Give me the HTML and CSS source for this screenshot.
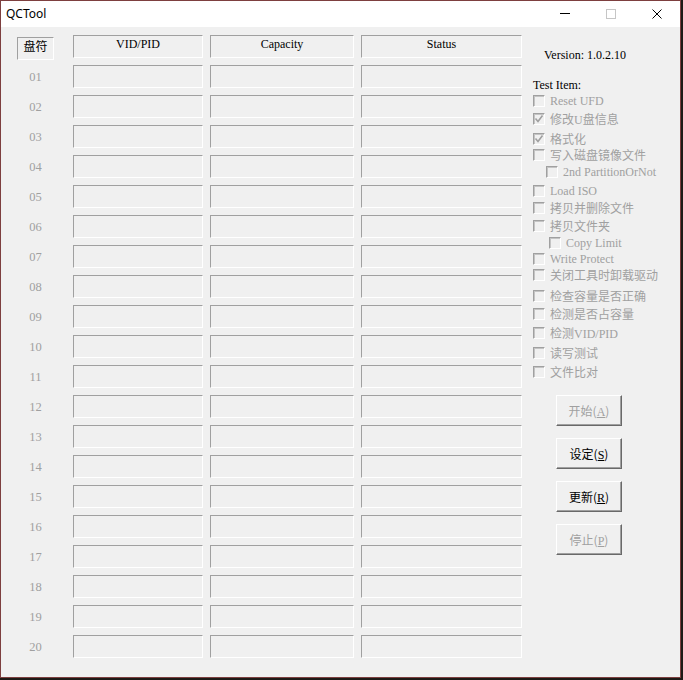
FILE: index.html
```html
<!DOCTYPE html>
<html lang="zh-cn">
<head>
    <meta charset="UTF-8">
    <title>QCTool</title>
    <link rel="stylesheet" href="styles.css">
</head>
<body>

<div class="window">
    <div class="titlebar">
        <span class="title">QCTool</span>
        <div class="controls">
            <span class="ctl"><i class="min"></i></span>
            <span class="ctl"><i class="max"></i></span>
            <span class="ctl">
                <svg width="10" height="10" viewBox="0 0 10 10"><path d="M0.5 0.5 L9.5 9.5 M9.5 0.5 L0.5 9.5" stroke="#000" stroke-width="1" fill="none"/></svg>
            </span>
        </div>
    </div>

    <div class="client">
        <div class="table">
            <div class="row head">
                <div class="num"><span class="drive">盘符</span></div>
                <div class="cell c1">VID/PID</div>
                <div class="cell c2">Capacity</div>
                <div class="cell c3">Status</div>
            </div>
            <div class="row"><div class="num">01</div><div class="cell c1"></div><div class="cell c2"></div><div class="cell c3"></div></div>
            <div class="row"><div class="num">02</div><div class="cell c1"></div><div class="cell c2"></div><div class="cell c3"></div></div>
            <div class="row"><div class="num">03</div><div class="cell c1"></div><div class="cell c2"></div><div class="cell c3"></div></div>
            <div class="row"><div class="num">04</div><div class="cell c1"></div><div class="cell c2"></div><div class="cell c3"></div></div>
            <div class="row"><div class="num">05</div><div class="cell c1"></div><div class="cell c2"></div><div class="cell c3"></div></div>
            <div class="row"><div class="num">06</div><div class="cell c1"></div><div class="cell c2"></div><div class="cell c3"></div></div>
            <div class="row"><div class="num">07</div><div class="cell c1"></div><div class="cell c2"></div><div class="cell c3"></div></div>
            <div class="row"><div class="num">08</div><div class="cell c1"></div><div class="cell c2"></div><div class="cell c3"></div></div>
            <div class="row"><div class="num">09</div><div class="cell c1"></div><div class="cell c2"></div><div class="cell c3"></div></div>
            <div class="row"><div class="num">10</div><div class="cell c1"></div><div class="cell c2"></div><div class="cell c3"></div></div>
            <div class="row"><div class="num">11</div><div class="cell c1"></div><div class="cell c2"></div><div class="cell c3"></div></div>
            <div class="row"><div class="num">12</div><div class="cell c1"></div><div class="cell c2"></div><div class="cell c3"></div></div>
            <div class="row"><div class="num">13</div><div class="cell c1"></div><div class="cell c2"></div><div class="cell c3"></div></div>
            <div class="row"><div class="num">14</div><div class="cell c1"></div><div class="cell c2"></div><div class="cell c3"></div></div>
            <div class="row"><div class="num">15</div><div class="cell c1"></div><div class="cell c2"></div><div class="cell c3"></div></div>
            <div class="row"><div class="num">16</div><div class="cell c1"></div><div class="cell c2"></div><div class="cell c3"></div></div>
            <div class="row"><div class="num">17</div><div class="cell c1"></div><div class="cell c2"></div><div class="cell c3"></div></div>
            <div class="row"><div class="num">18</div><div class="cell c1"></div><div class="cell c2"></div><div class="cell c3"></div></div>
            <div class="row"><div class="num">19</div><div class="cell c1"></div><div class="cell c2"></div><div class="cell c3"></div></div>
            <div class="row"><div class="num">20</div><div class="cell c1"></div><div class="cell c2"></div><div class="cell c3"></div></div>
        </div>

        <div class="panel">
            <div class="version">Version: 1.0.2.10</div>
            <div class="group-title">Test Item:</div>
            <div class="items">
                <label class="item"><span class="box"></span>Reset UFD</label>
                <label class="item"><span class="box checked"><svg width="10" height="10" viewBox="0 0 10 10"><path d="M1.5 4.5 L4 7.5 L8.5 1.5" stroke="#a0a0a0" stroke-width="1.6" fill="none"/></svg></span>修改U盘信息</label>
                <label class="item"><span class="box checked"><svg width="10" height="10" viewBox="0 0 10 10"><path d="M1.5 4.5 L4 7.5 L8.5 1.5" stroke="#a0a0a0" stroke-width="1.6" fill="none"/></svg></span>格式化</label>
                <label class="item"><span class="box"></span>写入磁盘镜像文件</label>
                <label class="item sub"><span class="box"></span>2nd PartitionOrNot</label>
                <label class="item"><span class="box"></span>Load ISO</label>
                <label class="item"><span class="box"></span>拷贝并删除文件</label>
                <label class="item"><span class="box"></span>拷贝文件夹</label>
                <label class="item sub2"><span class="box"></span>Copy Limit</label>
                <label class="item"><span class="box"></span>Write Protect</label>
                <label class="item"><span class="box"></span>关闭工具时卸载驱动</label>
                <label class="item"><span class="box"></span>检查容量是否正确</label>
                <label class="item"><span class="box"></span>检测是否占容量</label>
                <label class="item"><span class="box"></span>检测VID/PID</label>
                <label class="item"><span class="box"></span>读写测试</label>
                <label class="item"><span class="box"></span>文件比对</label>
            </div>

            <div class="buttons">
                <button class="btn" disabled>开始(<u>A</u>)</button>
                <button class="btn">设定(<u>S</u>)</button>
                <button class="btn">更新(<u>R</u>)</button>
                <button class="btn" disabled>停止(<u>P</u>)</button>
            </div>
        </div>
    </div>
</div>

</body>
</html>
```

FILE: styles.css
```css
/* QCTool window */
body {
    margin: 0;
    background-color: #1e1a16;
    font-family: "Liberation Serif", "Noto Sans CJK SC", serif;
    font-size: 12px;
}

.window {
    width: 679px;
    height: 676px;
    border: 1px solid #7d3f3f;
    background-color: #f0f0f0;
    display: flex;
    flex-direction: column;
}

.titlebar {
    height: 26px;
    background-color: #fff;
    display: flex;
    align-items: center;
    justify-content: space-between;
}

.title {
    font-family: "Noto Sans", sans-serif;
    font-size: 12px;
    padding-left: 5px;
    margin-top: -2px;
}

.controls {
    display: flex;
    height: 100%;
}

.ctl {
    width: 46px;
    display: flex;
    align-items: center;
    justify-content: center;
    margin-top: -1px;
}

.ctl .min {
    width: 10px;
    height: 1px;
    background-color: #000;
}

.ctl .max {
    width: 10px;
    height: 10px;
    box-sizing: border-box;
    border: 1px solid #c6c6c6;
}

.client {
    display: flex;
    align-items: flex-start;
    padding: 8px 0 0 16px;
}

/* grid of drives */
.table {
    display: flex;
    flex-direction: column;
    gap: 7px;
}

.row {
    display: flex;
    height: 23px;
}

.num {
    width: 37px;
    margin-right: 19px;
    text-align: center;
    line-height: 24px;
    font-size: 12.5px;
    color: #a0a0a0;
}

.head .num {
    padding-top: 2px;
}

.drive {
    display: block;
    height: 23px;
    box-sizing: border-box;
    border-top: 1px solid #a0a0a0;
    border-left: 1px solid #a0a0a0;
    border-right: 1px solid #fff;
    border-bottom: 1px solid #fff;
    color: #000;
    font-size: 12px;
    line-height: 19px;
}

.cell {
    height: 23px;
    box-sizing: border-box;
    border-top: 1px solid #a0a0a0;
    border-left: 1px solid #a0a0a0;
    border-right: 1px solid #fff;
    border-bottom: 1px solid #fff;
    text-align: center;
    line-height: 16px;
}

.c1 { width: 130px; margin-right: 7px; }
.c2 { width: 144px; margin-right: 7px; }
.c3 { width: 161px; }

/* right side */
.panel {
    margin-left: 11px;
    padding-top: 12px;
    display: flex;
    flex-direction: column;
}

.version {
    line-height: 16px;
    margin-left: 11px;
}

.group-title {
    margin-top: 14px;
    line-height: 16px;
}

.items {
    display: grid;
    grid-template-rows: 18px 20px 16px 17px 19px 17px 18px 17px 16px 16px 21px 18px 19px 20px 19px 16px;
}

.item {
    display: flex;
    align-items: center;
    height: 16px;
    color: #a0a0a0;
    white-space: nowrap;
}

.item.sub { padding-left: 13px; }
.item.sub2 { padding-left: 16px; }

.box {
    width: 12px;
    height: 12px;
    box-sizing: border-box;
    border-top: 1px solid #a0a0a0;
    border-left: 1px solid #a0a0a0;
    border-right: 1px solid #fff;
    border-bottom: 1px solid #fff;
    box-shadow: inset 1px 1px 0 #c4c4c4;
    margin-right: 5px;
    display: flex;
    align-items: center;
    justify-content: center;
    flex-shrink: 0;
}

.buttons {
    margin-top: 15px;
    margin-left: 23px;
    display: flex;
    flex-direction: column;
    gap: 12px;
}

.btn {
    width: 66px;
    height: 31px;
    padding: 0;
    box-sizing: border-box;
    background-color: #f0f0f0;
    border-top: 1px solid #fff;
    border-left: 1px solid #fff;
    border-right: 1px solid #696969;
    border-bottom: 1px solid #696969;
    box-shadow: inset -1px -1px 0 #a0a0a0;
    font-family: "Noto Sans CJK SC", "Liberation Serif", sans-serif;
    font-size: 12px;
    color: #000;
}

.btn:disabled {
    color: #a0a0a0;
}

.btn u {
    font-family: "Liberation Serif", serif;
}
```
